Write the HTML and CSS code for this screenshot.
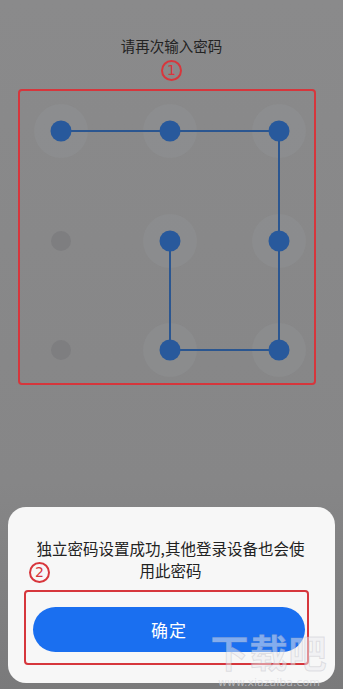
FILE: index.html
```html
<!DOCTYPE html>
<html lang="zh">
<head>
<meta charset="utf-8">
<link rel="stylesheet" href="styles.css">
</head>
<body>
<div class="screen">
  <div class="title">请再次输入密码</div>
  <div class="mark mark-1">1</div>
  <div class="pattern-box">
    <svg class="pattern" width="295" height="293" viewBox="0 0 295 293">
      <g fill="#939499" fill-opacity="0.35">
        <circle cx="41" cy="40" r="27"/>
        <circle cx="150" cy="40" r="27"/>
        <circle cx="259" cy="40" r="27"/>
        <circle cx="150" cy="150" r="27"/>
        <circle cx="259" cy="150" r="27"/>
        <circle cx="150" cy="259" r="27"/>
        <circle cx="259" cy="259" r="27"/>
      </g>
      <polyline points="41,40 150,40 259,40 259,150 259,259 150,259 150,150" fill="none" stroke="#2b5690" stroke-width="2"/>
      <g fill="#28599c">
        <circle cx="41" cy="40" r="10.5"/>
        <circle cx="150" cy="40" r="10.5"/>
        <circle cx="259" cy="40" r="10.5"/>
        <circle cx="150" cy="150" r="10.5"/>
        <circle cx="259" cy="150" r="10.5"/>
        <circle cx="150" cy="259" r="10.5"/>
        <circle cx="259" cy="259" r="10.5"/>
      </g>
      <g fill="#7e7e80">
        <circle cx="41" cy="150" r="10"/>
        <circle cx="41" cy="259" r="10"/>
      </g>
    </svg>
  </div>
  <div class="sheet">
    <div class="message">
      <span>独立密码设置成功,其他登录设备也会使</span>
      <span>用此密码</span>
    </div>
    <div class="mark mark-2">2</div>
    <button class="confirm">确定</button>
    <div class="annot-box"></div>
  </div>
  <div class="watermark">
    <span class="wm-big">下载吧</span>
    <span class="wm-small">www.xiazaiba.com</span>
  </div>
</div>
</body>
</html>
```
FILE: styles.css
```css
* { box-sizing: border-box; }
html, body {
  margin: 0;
  padding: 0;
  background: #888889;
}
body {
  width: 343px;
  height: 689px;
  overflow: hidden;
  font-family: "Noto Sans CJK SC", "Noto Sans", sans-serif;
}
.screen {
  position: relative;
  height: 689px;
  display: flex;
  flex-direction: column;
  align-items: center;
  background: linear-gradient(#8a8a8b, #868687 70%, #7a7a7b);
}
.title {
  margin-top: 36px;
  font-size: 14.5px;
  line-height: 20px;
  color: #232323;
  height: 20px;
}
.mark {
  width: 21px;
  height: 21px;
  border: 2px solid #d8363c;
  border-radius: 50%;
  color: #d8363c;
  font-family: "DejaVu Sans", sans-serif;
  font-size: 14px;
  line-height: 17px;
  text-align: center;
}
.mark-1 {
  margin-top: 4px;
}
.pattern-box {
  margin-top: 8px;
  margin-left: -9px;
  width: 298px;
  height: 296px;
  border: 2px solid #d6363c;
  border-radius: 4px;
}
.pattern {
  display: block;
}
.sheet {
  position: relative;
  margin-top: auto;
  margin-bottom: 6px;
  width: 327px;
  background: #f7f7f7;
  border-radius: 18px;
  padding: 30px 30px 31px 25px;
  overflow: hidden;
}
.message {
  margin: 0 0 0 3px;
  display: flex;
  flex-direction: column;
  align-items: center;
  font-size: 15.5px;
  line-height: 22px;
  color: #222;
  white-space: nowrap;
}
.mark-2 {
  position: absolute;
  left: 21px;
  top: 55px;
}
.confirm {
  display: block;
  width: 272px;
  height: 45px;
  margin-top: 26px;
  border: none;
  border-radius: 23px;
  background: #1a6ff0;
  color: #fff;
  font-family: "Noto Sans CJK SC", sans-serif;
  font-size: 17px;
  letter-spacing: 1px;
}
.annot-box {
  position: absolute;
  left: 16px;
  top: 83px;
  width: 285px;
  height: 75px;
  border: 2px solid #d6363c;
  border-radius: 4px;
}
.watermark {
  position: absolute;
  right: 10px;
  top: 630px;
  width: 128px;
  display: flex;
  flex-direction: column;
  align-items: center;
  gap: 5px;
  pointer-events: none;
}
.wm-big {
  font-size: 38px;
  line-height: 42px;
  height: 42px;
  font-weight: 700;
  letter-spacing: 1px;
  color: rgba(235, 235, 240, 0.5);
  -webkit-text-stroke: 1px rgba(170, 170, 180, 0.3);
}
.wm-small {
  font-family: "DejaVu Sans", sans-serif;
  font-size: 11px;
  line-height: 12px;
  color: rgba(215, 215, 220, 0.65);
}
```
